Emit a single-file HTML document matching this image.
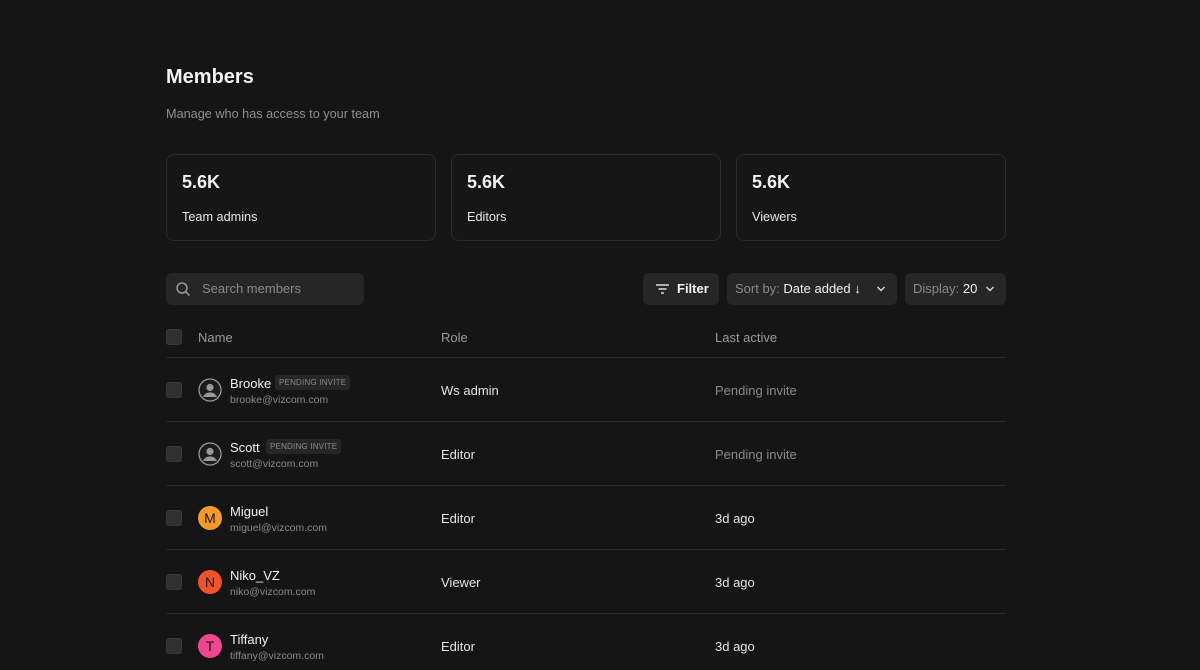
<!DOCTYPE html>
<html><head><style>
*{box-sizing:border-box;margin:0;padding:0}
body{width:1200px;height:670px;overflow:hidden;background:#151515;font-family:"Liberation Sans",sans-serif;color:#f2f2f2;position:relative}
.a{position:absolute}
.card{position:absolute;top:154px;width:270px;height:87px;border:1px solid #2b2b2b;border-radius:8px;background:#161616}
.card .n{position:absolute;left:15px;top:17px;font-size:18px;font-weight:bold}
.card .l{position:absolute;left:15px;top:55px;font-size:12.7px;color:#e8e8e8}
.btn{position:absolute;top:273px;height:32px;border-radius:6px;background:#262626;font-size:13px;line-height:32px}
.cb{position:absolute;left:166px;width:16px;height:16px;border-radius:3px;background:#303030;border:1px solid #3a3a3a}
.line{position:absolute;left:166px;width:840px;height:1px;background:#2a2a2a}
.nm{position:absolute;left:230px;font-size:13px;color:#f2f2f2}
.em{position:absolute;left:230px;font-size:10.5px;color:#8a8a8a}
.col{position:absolute;font-size:13px;color:#e4e4e4}
.av{position:absolute;left:198px;width:24px;height:24px;border-radius:50%;font-size:14px;text-align:center;line-height:24px;color:#1a1a1a}
.pi{position:absolute;font-size:8px;color:#8a8a8a;background:#262626;border-radius:3px;padding:3px 4px;letter-spacing:.2px}
.chev{position:absolute;top:13px}
</style></head><body>
<div class="a" style="left:166px;top:66px;font-size:20px;font-weight:bold">Members</div>
<div class="a" style="left:166px;top:107px;font-size:12.7px;color:#8f8f8f">Manage who has access to your team</div>
<div class="card" style="left:166px"><div class="n">5.6K</div><div class="l">Team admins</div></div>
<div class="card" style="left:451px"><div class="n">5.6K</div><div class="l">Editors</div></div>
<div class="card" style="left:736px"><div class="n">5.6K</div><div class="l">Viewers</div></div>

<div class="btn" style="left:166px;width:198px;color:#8a8a8a;padding-left:36px">Search members
<svg class="a" style="left:9px;top:8px" width="16" height="16" viewBox="0 0 16 16" fill="none" stroke="#9a9a9a" stroke-width="1.5"><circle cx="7" cy="7" r="5"/><path d="M11 11l3.5 3.5"/></svg></div>
<div class="btn" style="left:643px;width:76px;padding-left:34px;font-weight:bold">Filter
<svg class="a" style="left:12px;top:10px" width="15" height="12" viewBox="0 0 15 12" stroke="#ddd" stroke-width="1.4"><path d="M1 2h13M3.5 6h8M6 10h3"/></svg></div>
<div class="btn" style="left:727px;width:170px;padding-left:8px"><span style="color:#8a8a8a">Sort by:</span> Date added ↓
<svg class="chev" style="left:149px" width="10" height="6" viewBox="0 0 10 6" fill="none" stroke="#ddd" stroke-width="1.4"><path d="M1.5 1l3.5 3.5L8.5 1"/></svg></div>
<div class="btn" style="left:905px;width:101px;padding-left:8px"><span style="color:#8a8a8a">Display:</span> 20
<svg class="chev" style="left:80px" width="10" height="6" viewBox="0 0 10 6" fill="none" stroke="#ddd" stroke-width="1.4"><path d="M1.5 1l3.5 3.5L8.5 1"/></svg></div>

<div class="cb" style="top:329px"></div>
<div class="col" style="left:198px;top:330px;color:#9a9a9a">Name</div>
<div class="col" style="left:441px;top:330px;color:#9a9a9a">Role</div>
<div class="col" style="left:715px;top:330px;color:#9a9a9a">Last active</div>
<div class="line" style="top:357px"></div>

<div class="cb" style="top:382px"></div>
<svg class="a" style="left:198px;top:378px" width="24" height="24" viewBox="0 0 24 24"><circle cx="12" cy="12" r="11" fill="#1c1c1c" stroke="#999" stroke-width="1.3"/><circle cx="12" cy="9.5" r="3.6" fill="#999"/><path d="M5 19c1.5-3.5 4-4.5 7-4.5s5.5 1 7 4.5" fill="#999"/></svg>
<div class="nm" style="top:376px">Brooke</div><div class="pi" style="left:275px;top:375px">PENDING INVITE</div>
<div class="em" style="top:394px">brooke@vizcom.com</div>
<div class="col" style="left:441px;top:383px">Ws admin</div>
<div class="col" style="left:715px;top:383px;color:#8a8a8a">Pending invite</div>
<div class="line" style="top:421px"></div>

<div class="cb" style="top:446px"></div>
<svg class="a" style="left:198px;top:442px" width="24" height="24" viewBox="0 0 24 24"><circle cx="12" cy="12" r="11" fill="#1c1c1c" stroke="#999" stroke-width="1.3"/><circle cx="12" cy="9.5" r="3.6" fill="#999"/><path d="M5 19c1.5-3.5 4-4.5 7-4.5s5.5 1 7 4.5" fill="#999"/></svg>
<div class="nm" style="top:440px">Scott</div><div class="pi" style="left:266px;top:439px">PENDING INVITE</div>
<div class="em" style="top:458px">scott@vizcom.com</div>
<div class="col" style="left:441px;top:447px">Editor</div>
<div class="col" style="left:715px;top:447px;color:#8a8a8a">Pending invite</div>
<div class="line" style="top:485px"></div>

<div class="cb" style="top:510px"></div>
<div class="av" style="top:506px;background:#f39a2b">M</div>
<div class="nm" style="top:504px">Miguel</div>
<div class="em" style="top:522px">miguel@vizcom.com</div>
<div class="col" style="left:441px;top:511px">Editor</div>
<div class="col" style="left:715px;top:511px">3d ago</div>
<div class="line" style="top:549px"></div>

<div class="cb" style="top:574px"></div>
<div class="av" style="top:570px;background:#f0522c">N</div>
<div class="nm" style="top:568px">Niko_VZ</div>
<div class="em" style="top:586px">niko@vizcom.com</div>
<div class="col" style="left:441px;top:575px">Viewer</div>
<div class="col" style="left:715px;top:575px">3d ago</div>
<div class="line" style="top:613px"></div>

<div class="cb" style="top:638px"></div>
<div class="av" style="top:634px;background:#f0468e">T</div>
<div class="nm" style="top:632px">Tiffany</div>
<div class="em" style="top:650px">tiffany@vizcom.com</div>
<div class="col" style="left:441px;top:639px">Editor</div>
<div class="col" style="left:715px;top:639px">3d ago</div>
</body></html>
